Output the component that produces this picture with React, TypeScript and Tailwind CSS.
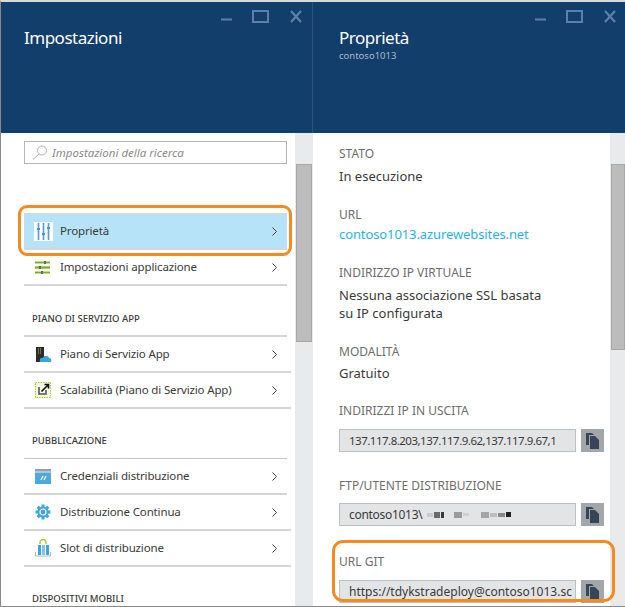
import { ReactNode } from 'react'

const WindowControls = () => (
  <div className="flex h-[24px] items-start justify-end text-[#5f80a6]">
    <svg width="94" height="24" viewBox="0 0 94 24" fill="none" stroke="currentColor">
      <path d="M11 17.5h11" strokeWidth="2" />
      <rect x="43" y="9" width="15" height="11" strokeWidth="2" />
      <path d="M81 9l10 11M91 9L81 20" strokeWidth="2.2" />
    </svg>
  </div>
)

const Chevron = () => (
  <svg width="5" height="9" viewBox="0 0 5 9" fill="none" stroke="#444" strokeWidth="1">
    <path d="M.5 .5L4.5 4.5.5 8.5" />
  </svg>
)

const SlidersIcon = () => (
  <svg width="19" height="19" viewBox="0 0 19 19">
    <rect width="19" height="19" fill="#fff" />
    <rect x="3" y="1" width="3" height="17" fill="#b7e3f8" />
    <rect x="8" y="1" width="3" height="17" fill="#b7e3f8" />
    <rect x="13" y="1" width="3" height="17" fill="#b7e3f8" />
    <path d="M4.5 1v17M9.5 1v17M14.5 1v17" stroke="#7f93a3" strokeWidth="1" />
    <rect x="3" y="6" width="3" height="2" fill="#2f9fd8" />
    <rect x="8" y="11" width="3" height="2" fill="#2f9fd8" />
    <rect x="13" y="5" width="3" height="2" fill="#2f9fd8" />
  </svg>
)

const AppSettingsIcon = () => (
  <svg width="16" height="14" viewBox="0 0 16 14">
    <rect y="1" width="15" height="3" fill="#c5dd8e" />
    <rect y="6" width="15" height="3" fill="#a9cc5a" />
    <rect y="11" width="15" height="3" fill="#c5dd8e" />
    <path d="M0 2.5h15M0 7.5h15M0 12.5h15" stroke="#7fa83a" strokeWidth="1" />
    <rect x="9" y="1" width="2" height="3" fill="#5f6f5f" />
    <rect x="4" y="6" width="2" height="3" fill="#5f6f5f" />
    <rect x="6" y="11" width="2" height="3" fill="#5f6f5f" />
  </svg>
)

const PlanIcon = () => (
  <svg width="17" height="17" viewBox="0 0 17 17">
    <rect x="1" y="1" width="8" height="15" fill="#2b2b2b" />
    <path d="M3 3h3M3 5h3M3 7h3" stroke="#a8c64a" strokeWidth="1" strokeDasharray="1 1" />
    <path d="M5 16c-1-3 1-5 3-4 1-3 5-3 6 0 2 0 3 2 2 4z" fill="#3ca5dc" />
  </svg>
)

const ScaleIcon = () => (
  <svg width="16" height="16" viewBox="0 0 16 16">
    <rect x=".5" y=".5" width="15" height="15" fill="#f3f7e2" stroke="#a9c92f" strokeDasharray="1.5 1" />
    <path d="M4 5v7h7V8" fill="none" stroke="#555" strokeWidth="1.6" />
    <path d="M6.5 9.5L13 3M9.5 2.5h4v4" fill="none" stroke="#111" strokeWidth="1.6" />
  </svg>
)

const CredentialsIcon = () => (
  <svg width="16" height="15" viewBox="0 0 16 15">
    <rect width="16" height="15" fill="#4fa9dc" />
    <rect width="16" height="2.5" fill="#9a9fa3" />
    <rect y="2.5" width="16" height="1" fill="#e4f2fa" />
    <path d="M6 11l2-4M9 11l2-4" stroke="#fff" strokeWidth="1.2" />
  </svg>
)

const GearIcon = () => (
  <svg width="16" height="16" viewBox="0 0 16 16">
    <path d="M8 8L8 0.5M8 8L13.3 2.7M8 8L15.5 8M8 8L13.3 13.3M8 8L8 15.5M8 8L2.7 13.3M8 8L.5 8M8 8L2.7 2.7" stroke="#3ca5dc" strokeWidth="3" />
    <circle cx="8" cy="8" r="5.5" fill="#3ca5dc" />
    <circle cx="8" cy="8" r="3" fill="none" stroke="#fff" strokeWidth="1.2" />
  </svg>
)

const SlotIcon = () => (
  <svg width="16" height="18" viewBox="0 0 16 18">
    <path d="M5 5V3.5a3 3 0 016 0V5" fill="none" stroke="#a9c92f" strokeWidth="1.4" />
    <path d="M.5 13v4h15v-4" fill="none" stroke="#b5b5b5" />
    <rect x="3" y="6" width="3" height="10" fill="#3ca5dc" />
    <rect x="7" y="6" width="3" height="10" fill="#7fc4ea" />
    <rect x="11" y="6" width="3" height="10" fill="#3ca5dc" />
  </svg>
)

const CopyIcon = () => (
  <span className="flex h-[23px] w-[23px] shrink-0 items-center justify-center bg-[#a4a7a9]">
    <svg width="13" height="16" viewBox="0 0 13 16" fill="#36465a">
      <path d="M0 0h6l2 2H3v10H0z" />
      <path d="M4 3h5l4 4v9H4z" />
    </svg>
  </span>
)

const Row = ({ icon, label, wide, active }: { icon: ReactNode; label: string; wide?: boolean; active?: boolean }) => (
  <div
    className={`flex h-[36px] items-center border-b-2 border-[#d4d6d7] ${wide ? 'mr-[-4px]' : ''} ${active ? 'bg-[#b7e3f8]' : ''}`}
  >
    <span className="flex w-[36px] shrink-0 justify-center pl-[2px]">{icon}</span>
    <span className="flex-1 text-[11.5px] tracking-[-0.15px] text-[#3a3a3a]">{label}</span>
    <span className={wide ? 'pr-[14px]' : 'pr-[10px]'}>
      <Chevron />
    </span>
  </div>
)

const SectionTitle = ({ children, className }: { children: string; className: string }) => (
  <div className={`flex h-[20px] items-center pl-[8px] text-[9.5px] font-medium text-[#3a3a3a] ${className}`}>{children}</div>
)

const Scrollbar = ({ thumbHeight, width }: { thumbHeight: string; width: string }) => (
  <div className={`flex shrink-0 flex-col bg-[#e9eaec] pl-[1px] pt-[31px] ${width}`}>
    <div className={`border border-[#a8a8a8] bg-[#bcbcbc] ${thumbHeight}`} />
  </div>
)

const Label = ({ children, className = '' }: { children: string; className?: string }) => (
  <div className={`h-[20px] text-[12px] leading-[20px] text-[#6e6e6e] ${className}`}>{children}</div>
)

const Value = ({ children, className = 'leading-[20px] text-[#3a3a3a]' }: { children: ReactNode; className?: string }) => (
  <div className={`text-[13px] ${className}`}>{children}</div>
)

const Field = ({ children, className }: { children: ReactNode; className: string }) => (
  <div className={`flex gap-[5px] ${className}`}>
    <div className="flex h-[23px] w-[237px] items-center overflow-hidden whitespace-nowrap border border-[#bdbfc0] bg-[#e3e4e6] pl-[9px] text-[12px] text-[#3a3a3a]">
      {children}
    </div>
    <CopyIcon />
  </div>
)

const Smudge = () => (
  <span className="ml-[5px] flex items-center gap-[1px]">
    <span className="h-[4px] w-[6px] bg-[#c9c9c9]" />
    <span className="h-[6px] w-[6px] bg-[#6a6a6a]" />
    <span className="h-[6px] w-[3px] bg-[#3a3a3a]" />
    <span className="ml-[9px] h-[6px] w-[8px] bg-[#9a9a9a]" />
    <span className="h-[3px] w-[6px] bg-[#d0d0d0]" />
    <span className="ml-[11px] h-[6px] w-[8px] bg-[#a5a5a5]" />
    <span className="h-[4px] w-[7px] bg-[#bdbdbd]" />
    <span className="h-[4px] w-[7px] bg-[#8a8a8a]" />
    <span className="h-[5px] w-[5px] bg-[#222]" />
  </span>
)

export default function App() {
  return (
    <div className="relative flex h-[607px] w-[625px] overflow-hidden bg-white font-['Noto_Sans',sans-serif]">
      {/* left blade */}
      <div className="flex h-full w-[313px] shrink-0 flex-col border-b border-l border-t-2 border-[#8a8a8a] border-t-[#d9d9d9]">
        <div className="h-[131px] shrink-0 border-r border-[#2b5278] bg-[#123e6b] pl-[23px] pr-[8px]">
          <WindowControls />
          <h1 className="text-[17px] leading-[24px] tracking-[-0.5px] text-white">Impostazioni</h1>
        </div>
        <div className="flex min-h-0 flex-1 border-r border-[#e9eaec]">
          <div className="min-w-0 flex-1 overflow-hidden pl-[23px] pr-[8px] pt-[8px]">
            <div className="flex h-[23px] items-center gap-[4px] border border-[#b5b7b9] pl-[7px]">
              <svg width="16" height="15" viewBox="0 0 16 15" fill="none" stroke="#b0b0b0">
                <circle cx="10" cy="5.5" r="4.5" />
                <path d="M7 9l-6 5.5" />
              </svg>
              <span className="text-[11.5px] italic text-[#8a8a8a]">Impostazioni della ricerca</span>
            </div>
            <div className="mt-[49px] border-t border-[#d4d6d7]">
              <Row active icon={<SlidersIcon />} label="Proprietà" />
              <Row icon={<AppSettingsIcon />} label="Impostazioni applicazione" />
            </div>
            <SectionTitle className="mt-[23px] mb-[6px]">PIANO DI SERVIZIO APP</SectionTitle>
            <div className="border-t-2 border-[#d4d6d7]">
              <Row wide icon={<PlanIcon />} label="Piano di Servizio App" />
              <Row wide icon={<ScaleIcon />} label="Scalabilità (Piano di Servizio App)" />
            </div>
            <SectionTitle className="mt-[22px] mb-[7px]">PUBBLICAZIONE</SectionTitle>
            <div className="border-t border-[#c4c6c7]">
              <Row icon={<CredentialsIcon />} label="Credenziali distribuzione" />
              <Row wide icon={<GearIcon />} label="Distribuzione Continua" />
              <Row wide icon={<SlotIcon />} label="Slot di distribuzione" />
            </div>
            <SectionTitle className="mt-[22px]">DISPOSITIVI MOBILI</SectionTitle>
          </div>
          <Scrollbar width="w-[17px]" thumbHeight="h-[178px]" />
        </div>
      </div>

      {/* right blade */}
      <div className="flex h-full min-w-0 flex-1 flex-col border-b border-t-2 border-[#8a8a8a] border-t-[#d9d9d9]">
        <div className="h-[131px] shrink-0 bg-[#123e6b] pl-[26px] pr-[7px]">
          <WindowControls />
          <h2 className="text-[17px] leading-[24px] tracking-[-0.5px] text-white">Proprietà</h2>
          <p className="text-[9.5px] leading-[12px] text-[#a9b8c9]">contoso1013</p>
        </div>
        <div className="flex min-h-0 flex-1">
          <div className="min-w-0 flex-1 overflow-hidden pl-[26px] pt-[11px]">
            <Label>STATO</Label>
            <Value className="mt-[2px] leading-[20px] text-[#3a3a3a]">In esecuzione</Value>
            <Label className="mt-[19px]">URL</Label>
            <Value className="mt-[-1px] leading-[20px] tracking-[-0.1px] text-[#1eb4ea]">contoso1013.azurewebsites.net</Value>
            <Label className="mt-[19px]">INDIRIZZO IP VIRTUALE</Label>
            <Value className="mt-[3px] leading-[18px] text-[#3a3a3a]">
              Nessuna associazione SSL basata
              <br />
              su IP configurata
            </Value>
            <Label className="mt-[20px]">MODALITÀ</Label>
            <Value className="mt-[1px] leading-[20px] text-[#3a3a3a]">Gratuito</Value>
            <Label className="mt-[18px]">INDIRIZZI IP IN USCITA</Label>
            <Field className="mt-[8px]">
              <span className="text-[11.5px] tracking-[-0.5px]">137.117.8.203,137.117.9.62,137.117.9.67,1</span>
            </Field>
            <Label className="mt-[24px]">FTP/UTENTE DISTRIBUZIONE</Label>
            <Field className="mt-[7px]">
              <span className="tracking-[-0.3px]">contoso1013\</span>
              <Smudge />
            </Field>
            <Label className="mt-[26px]">URL GIT</Label>
            <Field className="mt-[8px]">https://tdykstradeploy@contoso1013.sc</Field>
          </div>
          <Scrollbar width="w-[15px]" thumbHeight="h-[186px]" />
        </div>
      </div>

      {/* callout rings */}
      <div className="absolute left-[18px] top-[205px] h-[51px] w-[274px] rounded-[9px] border-[3px] border-[#f58a1f]" />
      <div className="absolute left-[332px] top-[540px] h-[62px] w-[283px] rounded-[11px] border-[3px] border-[#f58a1f]" />
    </div>
  )
}
